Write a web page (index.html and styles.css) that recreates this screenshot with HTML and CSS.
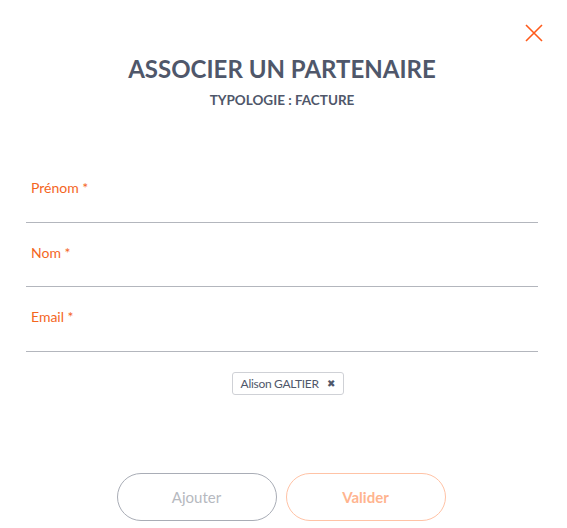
FILE: index.html
```html
<!DOCTYPE html>
<html lang="fr">
<head>
    <meta charset="UTF-8">
    <title>Associer un partenaire</title>
    <link rel="stylesheet" href="styles.css">
</head>
<body>
    <div class="modal">
        <button class="close-btn" aria-label="Fermer">
            <svg width="18" height="18" viewBox="0 0 18 18">
                <path d="M1 1 L17 17 M17 1 L1 17" stroke="#ff5a1a" stroke-width="1.6" fill="none"/>
            </svg>
        </button>

        <div class="header">
            <h1>ASSOCIER UN PARTENAIRE</h1>
            <p>TYPOLOGIE : FACTURE</p>
        </div>

        <form class="form">
            <div class="field">
                <label>Prénom *</label>
                <input type="text">
            </div>
            <div class="field">
                <label>Nom *</label>
                <input type="text">
            </div>
            <div class="field">
                <label>Email *</label>
                <input type="email">
            </div>
        </form>

        <div class="chips">
            <span class="chip">Alison GALTIER <span class="chip-remove">&#x2716;</span></span>
        </div>

        <div class="actions">
            <button class="btn btn-grey">Ajouter</button>
            <button class="btn btn-orange">Valider</button>
        </div>
    </div>
</body>
</html>
```

FILE: styles.css
```css
* {
    box-sizing: border-box;
    margin: 0;
    padding: 0;
}

body {
    font-family: Lato, 'Open Sans', sans-serif;
    background: #fff;
    width: 567px;
    height: 528px;
    overflow: hidden;
}

.modal {
    position: relative;
    padding: 54px 29px 0 26px;
}

.close-btn {
    position: absolute;
    top: 24px;
    right: 24px;
    width: 18px;
    height: 18px;
    border: none;
    background: none;
    cursor: pointer;
}

.close-btn svg {
    display: block;
}

.header {
    text-align: center;
    color: #4f576a;
}

.header h1 {
    font-size: 24px;
    font-weight: 700;
    line-height: 30px;
}

.header p {
    margin-top: 8px;
    font-size: 13.5px;
    font-weight: 700;
    line-height: 16px;
}

.form {
    margin-top: 50px;
}

.field {
    display: flex;
    flex-direction: column;
    padding-top: 21px;
    border-bottom: 1px solid #b3b6bd;
}

.field label {
    font-size: 14px;
    line-height: 17px;
    color: #f4661e;
    padding-left: 5px;
}

.field input {
    height: 25.5px;
    border: none;
    outline: none;
    font-family: inherit;
    font-size: 14px;
}

.chips {
    display: flex;
    justify-content: center;
    margin-top: 20px;
}

.chip {
    margin-left: 12px;
    display: inline-flex;
    align-items: center;
    gap: 8px;
    height: 23px;
    padding: 0 9px 0 8px;
    border: 1px solid #cfd1d6;
    border-radius: 3px;
    font-size: 12px;
    color: #4f576a;
    letter-spacing: -0.3px;
}

.chip-remove {
    font-size: 10px;
    color: #4f576a;
}

.actions {
    display: flex;
    justify-content: center;
    gap: 9px;
    margin-top: 78px;
    padding-right: 2px;
}

.btn {
    width: 160px;
    height: 48px;
    border-radius: 24px;
    background: #fff;
    font-family: inherit;
    font-size: 15px;
    cursor: pointer;
}

.btn-grey {
    border: 1px solid #a9adb6;
    color: #b6b9c0;
}

.btn-orange {
    border: 1px solid #ffc3a6;
    color: #ffb48f;
    font-weight: 700;
}
```
